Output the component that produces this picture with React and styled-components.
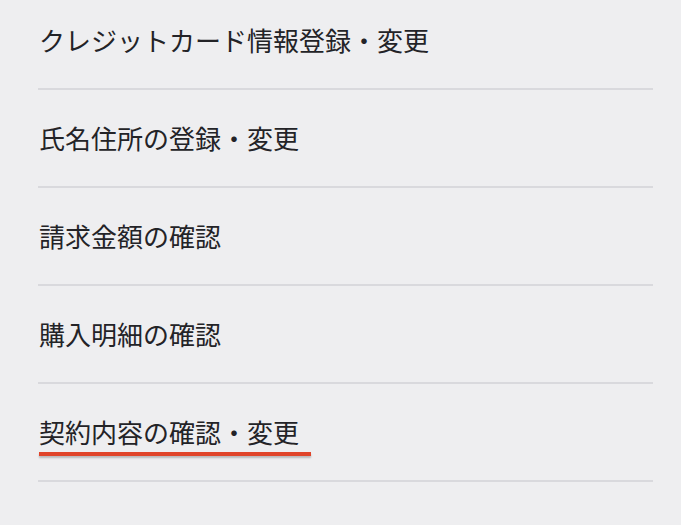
import React from "react";
import styled, { createGlobalStyle } from "styled-components";

const Global = createGlobalStyle`
  html, body { margin: 0; padding: 0; background: #eeeef0; }
  body { font-family: "Noto Sans CJK JP", "Noto Sans", sans-serif; }
`;

const Page = styled.div`
  width: 681px;
  height: 525px;
  overflow: hidden;
  background: #eeeef0;
  padding: 0 28px 0 38px;
  box-sizing: border-box;
`;

const List = styled.ul`
  list-style: none;
  margin: -8px 0 0;
  padding: 0;
`;

const Row = styled.li`
  height: 96px;
  display: flex;
  align-items: center;
  border-bottom: 2px solid #d9d9dd;
`;

const Label = styled.span`
  position: relative;
  display: inline-block;
  font-size: 26px;
  line-height: 36px;
  color: #232327;
  padding-left: 1px;
  ${(p) =>
    p.$active &&
    `
    padding-right: 12px;
    &::after {
      content: "";
      position: absolute;
      left: 1px;
      right: 0;
      bottom: -6px;
      height: 4px;
      background: #e0442a;
      box-shadow: 0 2px 2px rgba(0,0,0,0.22);
    }
  `}
`;

const items = [
  "クレジットカード情報登録・変更",
  "氏名住所の登録・変更",
  "請求金額の確認",
  "購入明細の確認",
  "契約内容の確認・変更",
];

export default function App() {
  return (
    <>
      <Global />
      <Page>
        <List>
          {items.map((t, i) => (
            <Row key={t}>
              <Label $active={i === items.length - 1}>{t}</Label>
            </Row>
          ))}
        </List>
      </Page>
    </>
  );
}
